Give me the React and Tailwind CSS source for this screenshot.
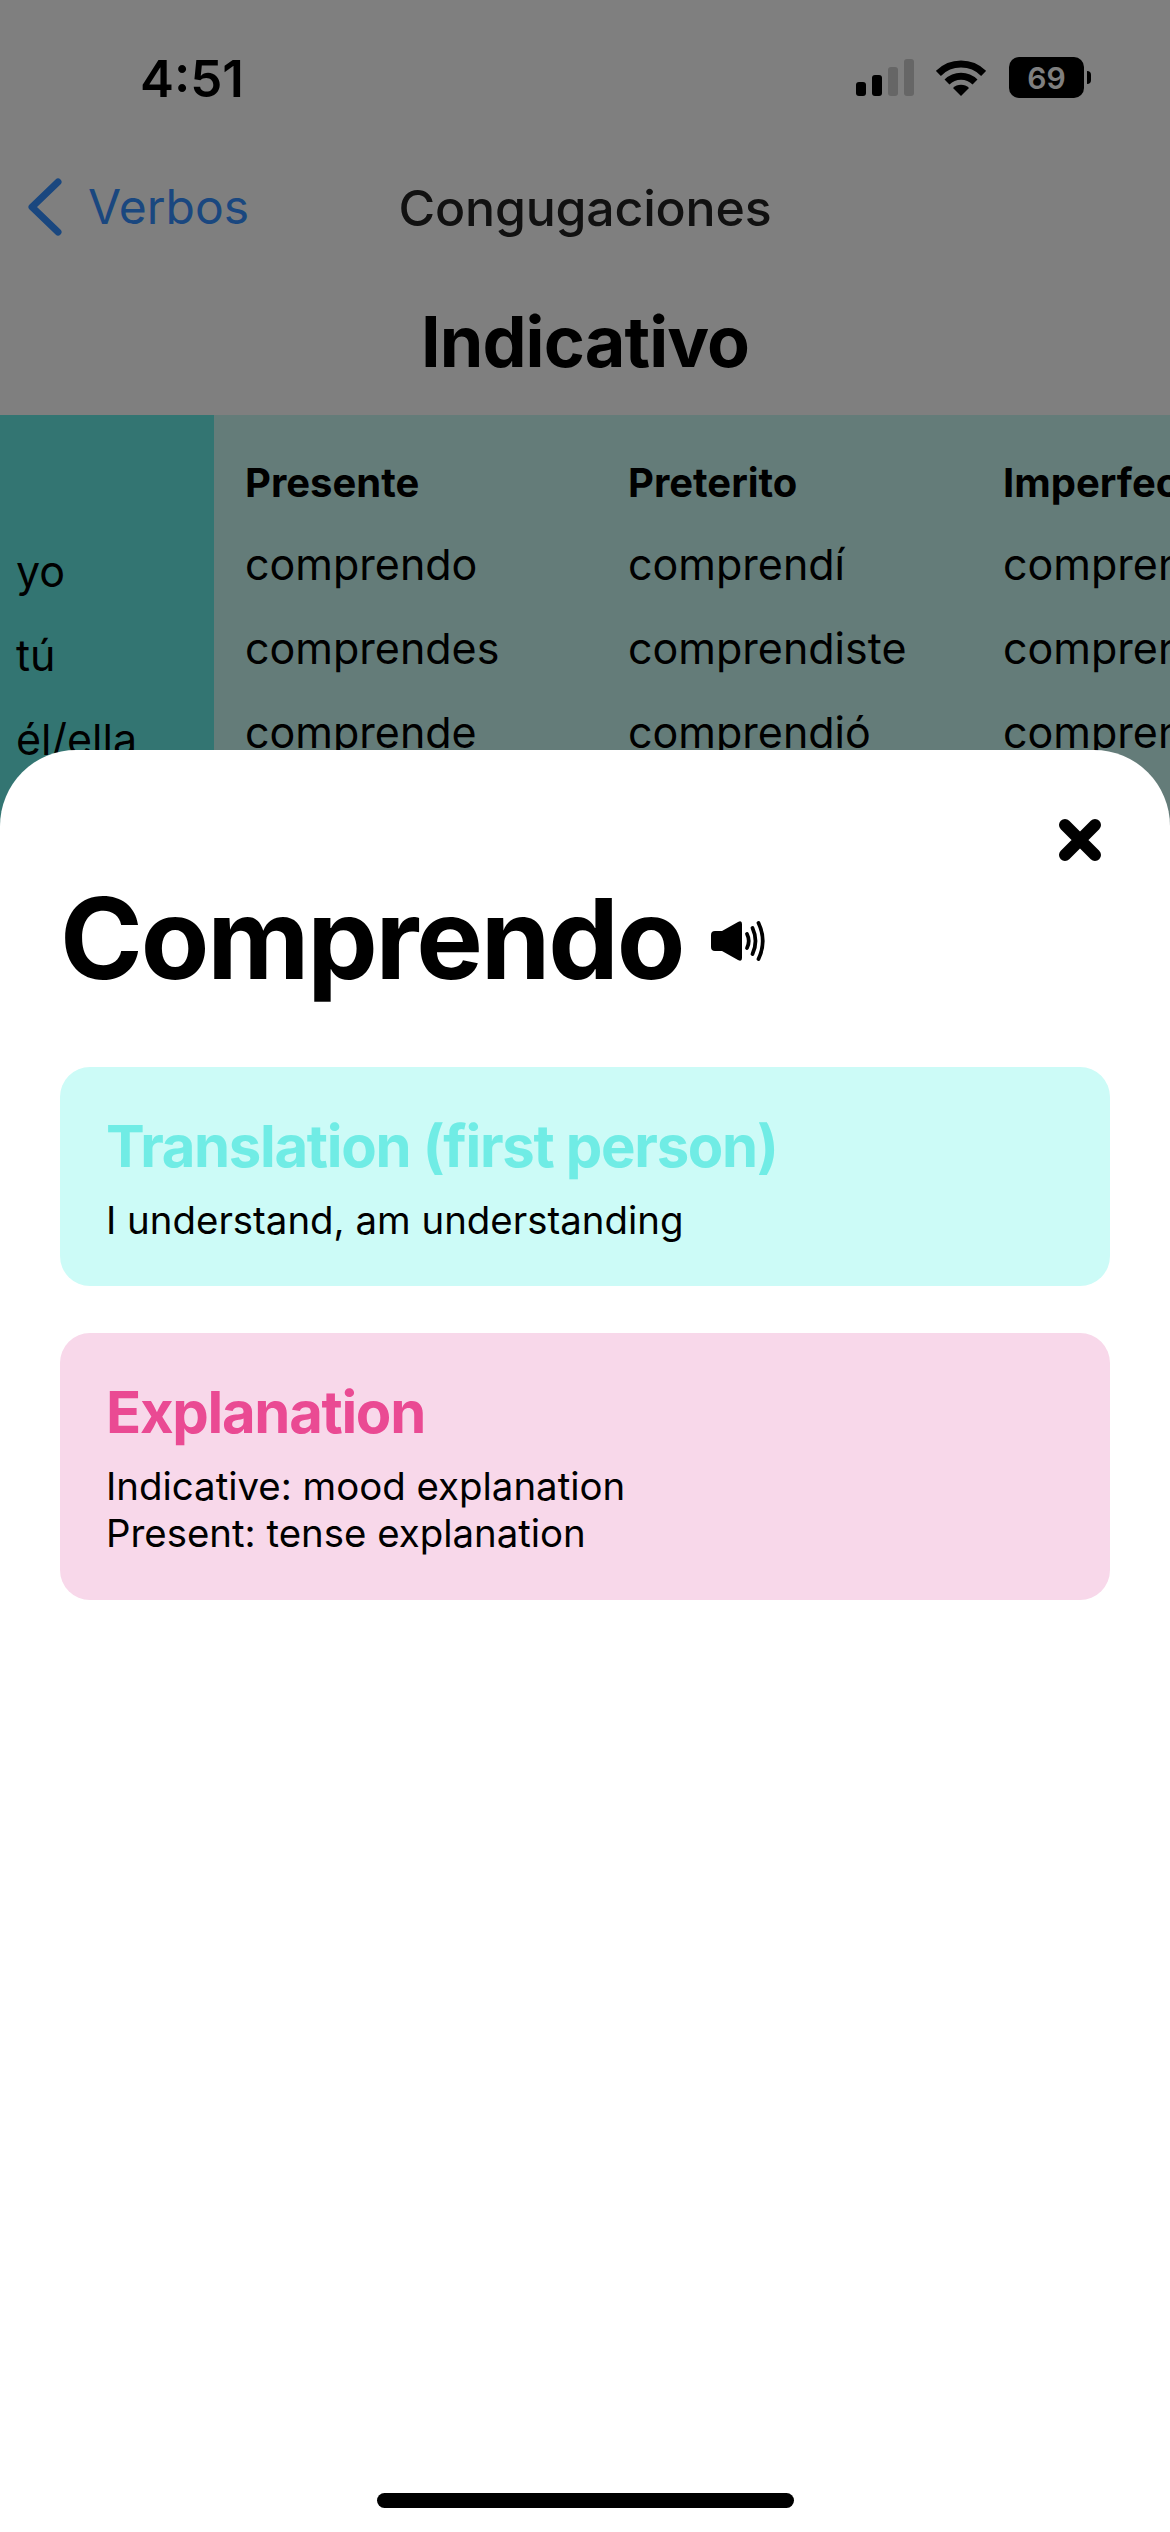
const ROWS = [
  { p: "yo", a: "comprendo", b: "comprendí", c: "comprendía" },
  { p: "tú", a: "comprendes", b: "comprendiste", c: "comprendías" },
  { p: "él/ella", a: "comprende", b: "comprendió", c: "comprendía" },
];

function Wifi() {
  return (
    <svg width="50" height="37" viewBox="0 0 50 37" fill="none" stroke="black" className="block">
      <path d="M2.4 14.4A32 32 0 0 1 47.6 14.4" strokeWidth="7" />
      <path d="M11 23A19.8 19.8 0 0 1 39 23" strokeWidth="7" />
      <path d="M25 37L17 29A11.3 11.3 0 0 1 33 29Z" fill="black" stroke="none" />
    </svg>
  );
}

function Speaker() {
  return (
    <svg width="54" height="40" viewBox="0 0 54 40" fill="none" className="block">
      <path d="M4 10H11L27 1Q31 -1 31 3V37Q31 41 27 39L11 30H4Q0 30 0 26V14Q0 10 4 10Z" fill="black" />
      <path d="M36 13Q39.5 20 36 27" stroke="black" strokeWidth="3.8" strokeLinecap="round" />
      <path d="M41.5 7Q47.5 20 41.5 33" stroke="black" strokeWidth="3.8" strokeLinecap="round" />
      <path d="M47.5 2Q56 20 47.5 38" stroke="black" strokeWidth="3.8" strokeLinecap="round" />
    </svg>
  );
}

function Close() {
  return (
    <svg width="44" height="44" viewBox="0 0 44 44" className="block">
      <path d="M7 7L37 37M37 7L7 37" stroke="black" strokeWidth="12" strokeLinecap="round" />
    </svg>
  );
}

function Column({ title, values, className }) {
  return (
    <div className={className}>
      <div className="h-[107px] pt-[46px] text-[40px] leading-[44px] font-bold whitespace-nowrap">{title}</div>
      {values.map((v, i) => (
        <div key={i} className="h-[84px] text-[43px] leading-[84px] whitespace-nowrap">{v}</div>
      ))}
    </div>
  );
}

export default function App() {
  return (
    <div className="relative h-[2532px] w-[1170px] overflow-hidden bg-white text-black font-['Inter',sans-serif]">
      <div className="flex h-[415px] flex-col">
        <div className="flex h-[156px] items-start justify-between pl-[140px] pr-[79px] pt-[49px]">
          <span className="text-[51px] leading-[60px] font-semibold">4:51</span>
          <div className="flex items-start pt-[8px]">
            <div className="mt-[2px] flex h-[37px] items-end gap-[6px]">
              <div className="h-[14px] w-[10px] rounded-[3px] bg-black" />
              <div className="h-[21px] w-[10px] rounded-[3px] bg-black" />
              <div className="h-[29px] w-[10px] rounded-[3px] bg-[#cccccc]" />
              <div className="h-[37px] w-[10px] rounded-[3px] bg-[#cccccc]" />
            </div>
            <div className="ml-[22px] mt-[2px]"><Wifi /></div>
            <div className="ml-[23px] flex h-[41px] w-[75px] items-center justify-center rounded-[10px] bg-black text-[30px] font-semibold leading-none text-white">69</div>
            <div className="ml-[3px] mt-[14px] h-[13px] w-[4px] rounded-r-full bg-black" />
          </div>
        </div>
        <div className="relative flex h-[104px] items-center justify-center">
          <div className="absolute left-[28px] top-[22px] flex items-center">
            <svg width="34" height="58" viewBox="0 0 34 58" fill="none" className="block">
              <path d="M30 4L4 29L30 54" stroke="#348fff" strokeWidth="7" strokeLinecap="round" strokeLinejoin="round" />
            </svg>
            <span className="ml-[26px] text-[48px] leading-[58px] text-[#348fff]">Verbos</span>
          </div>
          <span className="text-[50px] leading-[58px] font-medium tracking-[-0.2px] text-[#222222]">Congugaciones</span>
        </div>
        <div className="pt-[40px] text-center text-[70px] leading-[84px] font-bold tracking-[-0.9px]">Indicativo</div>
      </div>

      <div className="flex h-[500px] overflow-hidden bg-[#c8f8f2]">
        <div className="h-full w-[214px] shrink-0 bg-[#66eae4] pl-[16px] pt-[114px] text-[43px] leading-[84px]">
          {ROWS.map((r) => (
            <div key={r.p} className="h-[84px]">{r.p}</div>
          ))}
        </div>
        <div className="flex pl-[31px]">
          <Column title="Presente" values={ROWS.map((r) => r.a)} className="w-[383px] shrink-0" />
          <Column title="Preterito" values={ROWS.map((r) => r.b)} className="w-[375px] shrink-0" />
          <Column title="Imperfecto" values={ROWS.map((r) => r.c)} className="w-[383px] shrink-0" />
        </div>
      </div>

      <div className="absolute inset-0 bg-black/50" />

      <div className="absolute inset-x-0 bottom-0 top-[750px] rounded-t-[76px] bg-white px-[60px]">
        <div className="absolute right-[68px] top-[68px]"><Close /></div>
        <div className="flex items-center pt-[120px]">
          <h1 className="text-[112px] leading-[136px] font-bold tracking-[-2.2px]">Comprendo</h1>
          <div className="ml-[28px] mt-[6px]"><Speaker /></div>
        </div>
        <div className="mt-[61px] flex flex-col gap-[47px]">
          <div className="h-[219px] rounded-[30px] bg-[#ccfbf7] px-[46px] pt-[44px]">
            <div className="text-[58px] leading-[70px] font-bold tracking-[-1.3px] text-[#70ece5]">Translation (first person)</div>
            <div className="mt-[16px] text-[38.4px] leading-[47px]">I understand, am understanding</div>
          </div>
          <div className="h-[267px] rounded-[30px] bg-[#f8d8ea] px-[46px] pt-[44px]">
            <div className="text-[58px] leading-[70px] font-bold tracking-[-1.3px] text-[#ea4a93]">Explanation</div>
            <div className="mt-[16px] text-[38.4px] leading-[47px]">
              <div>Indicative: mood explanation</div>
              <div>Present: tense explanation</div>
            </div>
          </div>
        </div>
        <div className="absolute bottom-[24px] left-[377px] h-[15px] w-[417px] rounded-full bg-black" />
      </div>
    </div>
  );
}
